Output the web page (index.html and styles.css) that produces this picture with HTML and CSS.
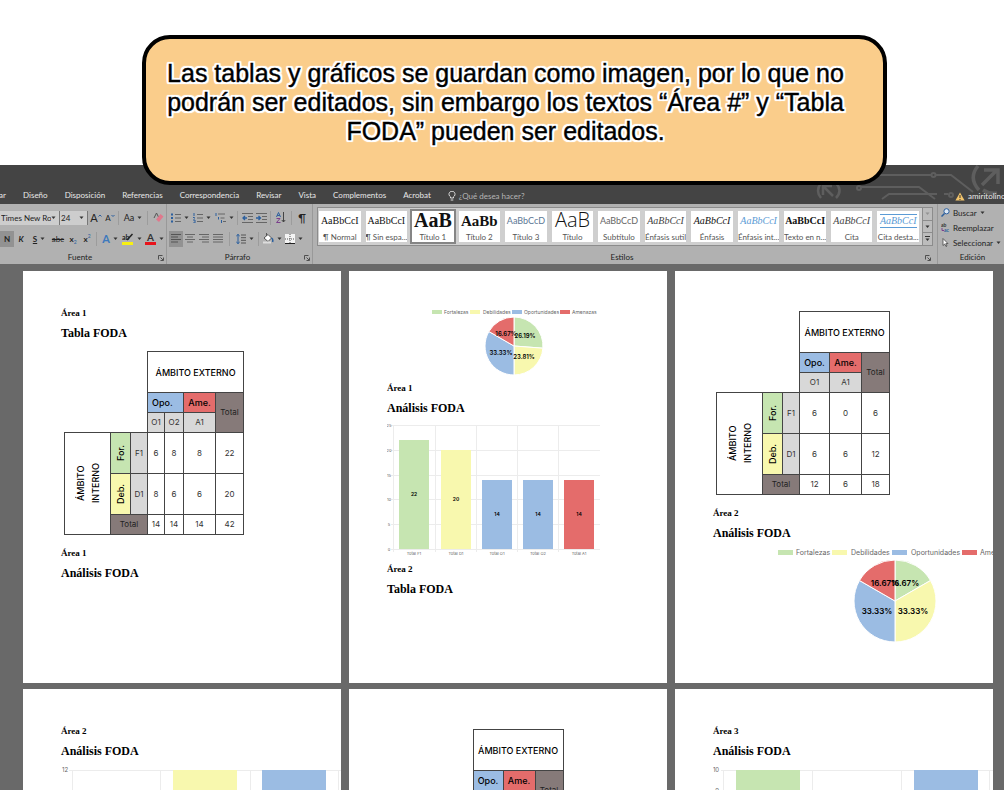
FILE: index.html
```html
<!DOCTYPE html>
<html lang="es">
<head>
<meta charset="utf-8">
<title>Tablas y gráficos FODA</title>
<link rel="stylesheet" href="styles.css">
</head>
<body>
<svg class="defs" aria-hidden="true">
  <symbol id="caret" viewBox="0 0 5 4"><path d="M0.5 0.5h4L2.5 3z" fill="#333"/></symbol>
  <symbol id="launch" viewBox="0 0 6 6"><path d="M0.5 4.5v-4h4M2.5 2.5l2.5 2.5M5.500 2.500v3h-3" fill="none" stroke="#444" stroke-width="0.9"/></symbol>
</svg>

<aside class="callout">
  <p>Las tablas y gráficos se guardan como imagen, por lo que no<br>podrán ser editados, sin embargo los textos “Área #” y “Tabla<br>FODA” pueden ser editados.</p>
</aside>

<main class="app">
  <header class="titlebar">
    <svg class="circuit" viewBox="0 0 190 38" aria-hidden="true">
      <g fill="none" stroke="#5e5e5e" stroke-width="2">
        <path d="M7 18q-6 8 0 15M22 18q7 8 0 15M19 31l-9-9M9 30v-9h9" stroke-width="2.500"/>
        <path d="M56 10h61M122 10h15l22 17M47 22h58l16 12M68 34l7-5h48M130 29h4"/>
        <circle cx="119.500" cy="10" r="2"/><circle cx="45" cy="23" r="2"/><circle cx="137" cy="30" r="2"/>
        <path d="M164 1q-10 12 1 24M169 25q6 4 14 3M168 20l15-15M170 5h14v14" stroke-width="3.500"/>
      </g>
    </svg>
    <nav class="tabs">
      <a href="#" class="cut">ar</a><a href="#">Diseño</a><a href="#">Disposición</a><a href="#">Referencias</a><a href="#">Correspondencia</a><a href="#">Revisar</a><a href="#">Vista</a><a href="#">Complementos</a><a href="#">Acrobat</a>
      <a href="#" class="ask"><svg width="8" height="10" viewBox="0 0 8 10"><path d="M2.500 7V5.800A3 3 0 1 1 5.500 5.800V7zM2.700 9h2.600" fill="none" stroke="#ddd"/></svg>¿Qué desea hacer?</a>
    </nav>
    <a href="#" class="account"><svg width="10" height="9" viewBox="0 0 10 9"><path d="M5 0.500L9.600 8.500H0.400z" fill="#f2c46b"/><path d="M5 3v3M5 7v1" stroke="#333"/></svg>amiritolino</a>
  </header>

  <section class="ribbon">
    <div class="group font-group">
      <div class="tools">
        <label class="box w60"><select aria-label="Fuente"><option>Times New Ro</option></select><svg class="caret"><use href="#caret"/></svg></label>
        <label class="box w28"><select aria-label="Tamaño"><option>24</option></select><svg class="caret"><use href="#caret"/></svg></label>
        <button class="w16 big" aria-label="Aumentar">A<svg width="4" height="8" viewBox="0 0 4 8"><path d="M0.500 2.500L2 1l1.500 1.500" fill="none" stroke="#2b5f9e"/></svg></button>
        <button class="w12" aria-label="Reducir">A<svg width="4" height="8" viewBox="0 0 4 8"><path d="M0.500 1L2 2.500 3.500 1" fill="none" stroke="#2b5f9e"/></svg></button>
        <i class="sep"></i>
        <button class="w24 case">Aa<svg class="caret"><use href="#caret"/></svg></button>
        <i class="sep"></i>
        <button class="w16" aria-label="Borrar formato"><svg width="11" height="11" viewBox="0 0 11 11"><path d="M1 6l2.500-5L5.500 5" fill="none" stroke="#555"/><path d="M3 7.500L7.500 2 10.500 4.500 6 10z" fill="#e0788c"/></svg></button>
      </div>
      <div class="tools">
        <button class="w14 pressed"><b>N</b></button>
        <button class="w14"><b><em>K</em></b></button>
        <button class="w22"><b><u>S</u></b><svg class="caret"><use href="#caret"/></svg></button>
        <button class="w16"><s>abc</s></button>
        <button class="w14"><b>x</b><small class="low">2</small></button>
        <button class="w14"><b>x</b><small class="high">2</small></button>
        <i class="sep"></i>
        <button class="w22 fx">A<svg class="caret"><use href="#caret"/></svg></button>
        <button class="w22" aria-label="Resaltado"><svg width="12" height="12" viewBox="0 0 12 12"><text x="0" y="7" font-size="7" font-weight="700" fill="#222">ab</text><path d="M5 7l5.500-6" stroke="#222" stroke-width="1.500"/><path d="M0 9h11v3H0z" fill="#f7f013"/></svg><svg class="caret"><use href="#caret"/></svg></button>
        <button class="w22" aria-label="Color de fuente"><svg width="11" height="12" viewBox="0 0 11 12"><text x="2" y="8" font-size="10" font-weight="700" fill="#333">A</text><path d="M0 9h11v3H0z" fill="#e8131b"/></svg><svg class="caret"><use href="#caret"/></svg></button>
      </div>
      <footer><span>Fuente</span><svg class="launch"><use href="#launch"/></svg></footer>
    </div>

    <div class="group para-group">
      <div class="tools">
        <button class="w22" aria-label="Viñetas"><svg width="10" height="10" viewBox="0 0 10 10"><path d="M0 1.500h2M0 5h2M0 8.500h2" stroke="#2b5f9e" stroke-width="2"/><path d="M4 1.500h6M4 5h6M4 8.500h6" stroke="#666"/></svg><svg class="caret"><use href="#caret"/></svg></button>
        <button class="w22" aria-label="Numeración"><svg width="10" height="10" viewBox="0 0 10 10"><path d="M1 0v3M0 4.500h1.500v1M0 7h2v3H0" stroke="#2b5f9e" fill="none"/><path d="M4 1.500h6M4 5h6M4 8.500h6" stroke="#666"/></svg><svg class="caret"><use href="#caret"/></svg></button>
        <button class="w22" aria-label="Lista multinivel"><svg width="11" height="10" viewBox="0 0 11 10"><path d="M1 0v3M3.500 4v2.500M6.500 7v3" stroke="#2b5f9e"/><path d="M3 1h7M5.500 5h4M8 8.500h3" stroke="#666"/></svg><svg class="caret"><use href="#caret"/></svg></button>
        <i class="sep"></i>
        <button class="w14" aria-label="Reducir sangría"><svg width="11" height="10" viewBox="0 0 11 10"><path d="M0 .5h11M6 3.500h5M6 6.500h5M0 9.500h11" stroke="#666"/><path d="M5 5H1M3 3L1 5l2 2" stroke="#2b5f9e" stroke-width="1.300" fill="none"/></svg></button>
        <button class="w14" aria-label="Aumentar sangría"><svg width="11" height="10" viewBox="0 0 11 10"><path d="M0 .5h11M6 3.500h5M6 6.500h5M0 9.500h11" stroke="#666"/><path d="M0 5h4M2.500 3l2 2-2 2" stroke="#2b5f9e" stroke-width="1.300" fill="none"/></svg></button>
        <i class="sep"></i>
        <button class="w16" aria-label="Ordenar"><svg width="10" height="11" viewBox="0 0 10 11"><path d="M0.500 5L2.500 0.500 4.500 5M1.200 3.500h2.600" stroke="#2b5f9e" fill="none"/><path d="M.5 6.500h3.500l-3.500 4H4.500" stroke="#7b3f8c" fill="none"/><path d="M7.500 0v10M5.800 8l1.700 2L9.200 8" stroke="#444" fill="none"/></svg></button>
        <i class="sep"></i>
        <button class="w16 big" aria-label="Marcas">¶</button>
      </div>
      <div class="tools">
        <button class="w14 pressed" aria-label="Izquierda"><svg width="10" height="9" viewBox="0 0 10 9"><path d="M0 .5h10M0 3h7M0 5.500h10M0 8h7" stroke="#555"/></svg></button>
        <button class="w14" aria-label="Centrar"><svg width="10" height="9" viewBox="0 0 10 9"><path d="M0 .5h10M2 3h6M0 5.500h10M2 8h6" stroke="#666"/></svg></button>
        <button class="w14" aria-label="Derecha"><svg width="10" height="9" viewBox="0 0 10 9"><path d="M0 .5h10M3 3h7M0 5.500h10M3 8h7" stroke="#666"/></svg></button>
        <button class="w14" aria-label="Justificar"><svg width="10" height="9" viewBox="0 0 10 9"><path d="M0 .5h10M0 3h10M0 5.500h10M0 8h10" stroke="#666"/></svg></button>
        <i class="sep wide"></i>
        <button class="w22" aria-label="Interlineado"><svg width="10" height="10" viewBox="0 0 10 10"><path d="M2 0v10M.3 2L2 .5 3.700 2M.3 8L2 9.500 3.700 8" stroke="#2b5f9e" fill="none"/><path d="M5 1h5M5 3.700h5M5 6.300h5M5 9h5" stroke="#555"/></svg><svg class="caret"><use href="#caret"/></svg></button>
        <i class="sep"></i>
        <button class="w22" aria-label="Sombreado"><svg width="11" height="11" viewBox="0 0 11 11"><path d="M1 5L5 1.500 8.500 5 5 8.500z" fill="#fff" stroke="#555"/><path d="M3.500 3V0" stroke="#555"/><path d="M8.500 5q2 1.500 1 4" stroke="#2b5f9e" fill="none" stroke-width="1.500"/><path d="M0 9.500h8" stroke="#ddd" stroke-width="2"/></svg><svg class="caret"><use href="#caret"/></svg></button>
        <button class="w22" aria-label="Bordes"><svg width="10" height="10" viewBox="0 0 10 10"><path d="M0 0h10v10H0z" fill="#f4f4f4"/><path d="M0 5h10M5 0v10" stroke="#555" stroke-dasharray="1 1"/><path d="M0 9.500h10" stroke="#222"/></svg><svg class="caret"><use href="#caret"/></svg></button>
      </div>
      <footer><span>Párrafo</span><svg class="launch"><use href="#launch"/></svg></footer>
    </div>

    <div class="group style-group">
      <div class="gallery">
        <div class="tiles">
          <button class="tile"><span class="pv">AaBbCcI</span><span>¶ Normal</span></button>
          <button class="tile"><span class="pv">AaBbCcI</span><span>¶ Sin espa...</span></button>
          <button class="tile selected"><span class="pv t1">AaB</span><span>Título 1</span></button>
          <button class="tile"><span class="pv t2">AaBb</span><span>Título 2</span></button>
          <button class="tile"><span class="pv sans blue">AaBbCcD</span><span>Título 3</span></button>
          <button class="tile"><span class="pv title">AaB</span><span>Título</span></button>
          <button class="tile"><span class="pv sans">AaBbCcD</span><span>Subtítulo</span></button>
          <button class="tile"><span class="pv it">AaBbCcI</span><span>Énfasis sutil</span></button>
          <button class="tile"><span class="pv it dark">AaBbCcI</span><span>Énfasis</span></button>
          <button class="tile"><span class="pv it sky">AaBbCcI</span><span>Énfasis int...</span></button>
          <button class="tile"><span class="pv strong">AaBbCcI</span><span>Texto en n...</span></button>
          <button class="tile"><span class="pv it">AaBbCcI</span><span>Cita</span></button>
          <button class="tile"><span class="pv it sky ruled">AaBbCcI</span><span>Cita desta...</span></button>
        </div>
        <div class="scroller">
          <button aria-label="Subir"><svg class="caret faint"><use href="#caret"/></svg></button>
          <button aria-label="Bajar"><svg class="caret"><use href="#caret"/></svg></button>
          <button aria-label="Más"><svg width="5" height="6" viewBox="0 0 5 6"><path d="M0 .5h5" stroke="#333"/><path d="M.5 2.500h4L2.500 5z" fill="#333"/></svg></button>
        </div>
      </div>
      <footer><span>Estilos</span><svg class="launch"><use href="#launch"/></svg></footer>
    </div>

    <div class="group edit-group">
      <button><svg width="9" height="9" viewBox="0 0 9 9"><circle cx="5.500" cy="3.300" r="2.600" fill="#dce8f5" stroke="#2b5f9e"/><path d="M3.500 5.500L.5 8.500" stroke="#2b5f9e" stroke-width="1.500"/></svg>Buscar<svg class="caret"><use href="#caret"/></svg></button>
      <button><svg width="9" height="9" viewBox="0 0 9 9"><text x="0" y="4" font-size="5" font-weight="700" fill="#333">ab</text><text x="3" y="9" font-size="5" font-weight="700" fill="#2b5f9e">ac</text><path d="M1 5v2.500h2" stroke="#7b3f8c" fill="none"/></svg>Reemplazar</button>
      <button><svg width="9" height="9" viewBox="0 0 9 9"><path d="M2 0.500v7l1.700-1.500L5 8.500l1-.5-1.200-2.400H7z" fill="#fff" stroke="#444" stroke-width=".8"/></svg>Seleccionar<svg class="caret"><use href="#caret"/></svg></button>
      <footer><span>Edición</span></footer>
    </div>
  </section>

  <section class="workspace">
    <article class="page">
      <h2>Área 1</h2>
      <h1>Tabla FODA</h1>
      <table class="foda">
        <colgroup><col class="c46"><col class="c20"><col class="c17"><col class="c17"><col class="c19"><col class="c32"><col class="c28"></colgroup>
        <tr class="tall"><td class="blank" colspan="3" rowspan="3"></td><th colspan="4">ÁMBITO EXTERNO</th></tr>
        <tr><th class="opo start" colspan="2">Opo.</th><th class="ame">Ame.</th><td class="total" rowspan="2">Total</td></tr>
        <tr><td class="key">O1</td><td class="key">O2</td><td class="key">A1</td></tr>
        <tr class="tall"><th class="side" rowspan="3"><span>ÁMBITO<br>INTERNO</span></th><th class="for"><span>For.</span></th><td class="key">F1</td><td>6</td><td>8</td><td>8</td><td>22</td></tr>
        <tr class="tall"><th class="deb"><span>Deb.</span></th><td class="key">D1</td><td>8</td><td>6</td><td>6</td><td>20</td></tr>
        <tr><td class="total" colspan="2">Total</td><td>14</td><td>14</td><td>14</td><td>42</td></tr>
      </table>
      <h2>Área 1</h2>
      <h1>Análisis FODA</h1>
    </article>

    <article class="page">
      <svg class="chart" width="220" height="75" viewBox="0 0 220 75" role="img" aria-label="Distribución FODA del área 1">
        <g class="legend s5">
          <path d="M45 7h10v4H45z" class="g"/><text x="57" y="11">Fortalezas</text>
          <path d="M83 7h10v4H83z" class="y"/><text x="96" y="11">Debilidades</text>
          <path d="M125 7h10v4h-10z" class="b"/><text x="137" y="11">Oportunidades</text>
          <path d="M173 7h10v4h-10z" class="r"/><text x="185" y="11">Amenazas</text>
        </g>
        <g class="slices">
          <path class="g" d="M127 43V14A29 29 0 0 1 155.900 45.200z"/>
          <path class="y" d="M127 43L155.900 45.200A29 29 0 0 1 127 72z"/>
          <path class="b" d="M127 43V72A29 29 0 0 1 101.900 28.500z"/>
          <path class="r" d="M127 43L101.900 28.500A29 29 0 0 1 127 14z"/>
        </g>
        <g class="value s6"><text x="119" y="33">16.67%</text><text x="138" y="35">26.19%</text><text x="114" y="52">33.33%</text><text x="137" y="56">23.81%</text></g>
      </svg>
      <h2>Área 1</h2>
      <h1>Análisis FODA</h1>
      <svg class="chart" width="220" height="141" viewBox="0 0 220 141" role="img" aria-label="Totales del área 1">
        <path class="grid" d="M4 7.500h209M4 32.500h209M4 57.500h209M4 81.500h209M4 106.500h209M4 131.500h209M6.500 7v127M48.500 7v127M89.500 7v127M130.500 7v127M171.500 7v127"/>
        <path class="g" d="M12 22h30v109H12z"/><path class="y" d="M54 32h30v99H54z"/><path class="b" d="M95 62h30v69H95zM136 62h30v69h-30z"/><path class="r" d="M177 62h30v69h-30z"/>
        <g class="value s5"><text x="27" y="78">22</text><text x="69" y="83">20</text><text x="110" y="98">14</text><text x="151" y="98">14</text><text x="192" y="98">14</text></g>
        <g class="axis s4"><text x="2" y="9">25</text><text x="2" y="34">20</text><text x="2" y="59">15</text><text x="2" y="83">10</text><text x="2" y="108">5</text><text x="2" y="133">0</text>
        <text x="27" y="137">Total F1</text><text x="69" y="137">Total D1</text><text x="110" y="137">Total O1</text><text x="151" y="137">Total O2</text><text x="192" y="137">Total A1</text></g>
      </svg>
      <h2>Área 2</h2>
      <h1>Tabla FODA</h1>
    </article>

    <article class="page">
      <table class="foda">
        <colgroup><col class="c46"><col class="c20"><col class="c17"><col class="c30"><col class="c32"><col class="c28"></colgroup>
        <tr class="tall"><td class="blank" colspan="3" rowspan="3"></td><th colspan="3">ÁMBITO EXTERNO</th></tr>
        <tr><th class="opo">Opo.</th><th class="ame">Ame.</th><td class="total" rowspan="2">Total</td></tr>
        <tr><td class="key">O1</td><td class="key">A1</td></tr>
        <tr class="tall"><th class="side" rowspan="3"><span>ÁMBITO<br>INTERNO</span></th><th class="for"><span>For.</span></th><td class="key">F1</td><td>6</td><td>0</td><td>6</td></tr>
        <tr class="tall"><th class="deb"><span>Deb.</span></th><td class="key">D1</td><td>6</td><td>6</td><td>12</td></tr>
        <tr><td class="total" colspan="2">Total</td><td>12</td><td>6</td><td>18</td></tr>
      </table>
      <h2>Área 2</h2>
      <h1>Análisis FODA</h1>
      <svg class="chart" width="310" height="104" viewBox="0 0 310 104" role="img" aria-label="Distribución FODA del área 2">
        <g class="legend s7">
          <path d="M65 7h15v5H65z" class="g"/><text x="83" y="12">Fortalezas</text>
          <path d="M119 7h15v5h-15z" class="y"/><text x="138" y="12">Debilidades</text>
          <path d="M179 7h15v5h-15z" class="b"/><text x="198" y="12">Oportunidades</text>
          <path d="M249 7h15v5h-15z" class="r"/><text x="267" y="12">Amenazas</text>
        </g>
        <g class="slices">
          <path class="g" d="M182 58V17A41 41 0 0 1 217.500 37.500z"/>
          <path class="y" d="M182 58L217.500 37.500A41 41 0 0 1 182 99z"/>
          <path class="b" d="M182 58V99A41 41 0 0 1 146.500 37.500z"/>
          <path class="r" d="M182 58L146.500 37.500A41 41 0 0 1 182 17z"/>
        </g>
        <g class="value s8"><text x="172" y="43">16.67%</text><text x="192" y="43">16.67%</text><text x="164" y="71">33.33%</text><text x="200" y="71">33.33%</text></g>
      </svg>
    </article>

    <article class="page">
      <h2>Área 2</h2>
      <h1>Análisis FODA</h1>
      <svg class="chart" width="280" height="200" viewBox="0 0 280 200" role="img" aria-label="Totales del área 2">
        <path class="grid" d="M8 9.500h272M11.500 9v180M99.500 9v180M189.500 9v180M277.500 9v180"/>
        <path class="y" d="M112 9h64v180h-64z"/><path class="b" d="M201 9h64v180h-64z"/>
        <g class="axis s6"><text x="4" y="11">12</text></g>
      </svg>
    </article>

    <article class="page">
      <table class="foda">
        <colgroup><col class="c46"><col class="c20"><col class="c17"><col class="c30"><col class="c32"><col class="c28"></colgroup>
        <tr class="tall"><td class="blank" colspan="3" rowspan="3"></td><th colspan="3">ÁMBITO EXTERNO</th></tr>
        <tr><th class="opo">Opo.</th><th class="ame">Ame.</th><td class="total" rowspan="2">Total</td></tr>
        <tr><td class="key">O1</td><td class="key">A1</td></tr>
      </table>
    </article>

    <article class="page">
      <h2>Área 3</h2>
      <h1>Análisis FODA</h1>
      <svg class="chart" width="280" height="200" viewBox="0 0 280 200" role="img" aria-label="Totales del área 3">
        <path class="grid" d="M8 9.500h272M8 29.500h272M10.500 9v180M99.500 9v180M188.500 9v180M276.500 9v180"/>
        <path class="g" d="M23 9h64v180H23z"/><path class="b" d="M201 9h64v180h-64z"/>
        <g class="axis s6"><text x="3" y="11">10</text><text x="4" y="32">9</text></g>
      </svg>
    </article>
  </section>
</main>
</body>
</html>
```
FILE: styles.css
```css
* { box-sizing: border-box; }
body {
  margin: 0;
  height: 100vh;
  display: flex;
  flex-direction: column;
  overflow: hidden;
  background: #fff;
  font-family: Lato, "Open Sans", sans-serif;
  font-size: 8px;
  color: #222;
}
.defs { position: absolute; width: 0; height: 0; }
button, select {
  font: inherit;
  color: inherit;
  background: none;
  border: 0;
  padding: 0;
  margin: 0;
}
a { color: inherit; text-decoration: none; }
svg { flex: none; }

/* Callout */
.callout {
  position: absolute;
  z-index: 2;
  top: 35px;
  left: 142px;
  right: 117px;
  height: 150px;
  padding: 20px 30px 0 12px;
  background: #facd8b;
  border: 4px solid #000;
  border-radius: 28px;
}
.callout p {
  margin: 0;
  font: 25px/29px "Liberation Sans", Arial, sans-serif;
  text-align: center;
  white-space: nowrap;
  color: #000;
  -webkit-text-stroke: 0.4px #000;
  text-shadow: 2px 0 #fff, -2px 0 #fff, 0 2px #fff, 0 -2px #fff, 2px 1px #fff, -2px 1px #fff, 2px -1px #fff, -2px -1px #fff, 1px 2px #fff, -1px 2px #fff, 1px -2px #fff, -1px -2px #fff, 2px 2px 1px #fff, -2px -2px 1px #fff, 2px -2px 1px #fff, -2px 2px 1px #fff;
}

/* Window */
.app {
  margin-top: 165px;
  flex: 1;
  min-height: 0;
  display: flex;
  flex-direction: column;
  background: #696969;
}
.titlebar {
  position: relative;
  flex: none;
  height: 39px;
  padding-top: 23px;
  display: flex;
  justify-content: space-between;
  background: #444;
  color: #e8e8e8;
  line-height: 15px;
  overflow: hidden;
}
.circuit { position: absolute; right: 0; top: 0; width: 190px; height: 38px; }
.tabs { display: flex; gap: 17px; padding-left: 1px; white-space: nowrap; }
.tabs .cut { width: 5px; display: flex; justify-content: flex-end; }
.ask { display: flex; align-items: center; gap: 3px; color: #b5b5b5; }
.account {
  position: relative;
  width: 49px;
  display: flex;
  align-items: center;
  gap: 3px;
  white-space: nowrap;
  overflow: hidden;
}

/* Ribbon */
.ribbon { flex: none; height: 60px; display: flex; background: #b1b1b1; }
.group {
  display: flex;
  flex-direction: column;
  border-right: 1px solid #999;
  padding-top: 3px;
}
.font-group { width: 167px; }
.para-group { width: 146px; padding-left: 2px; }
.style-group { flex: 1; min-width: 0; padding: 3px 4px 0; }
.edit-group { width: 66px; border: 0; padding: 1px 0 0 3px; }
.tools { display: flex; align-items: center; height: 21px; }
.tools button {
  height: 16px;
  display: flex;
  align-items: center;
  justify-content: center;
  gap: 3px;
  line-height: 16px;
}
.tools .pressed { background: #929292; }
.tools .big { font-size: 11px; }
.tools .case { font-size: 9px; }
.tools .big, .tools .w12, .tools .w14 { gap: 0; }
.tools .fx { font-size: 11px; font-weight: 700; color: #3d79bd; }
.low { font-size: 5px; align-self: flex-end; line-height: 10px; color: #2b5f9e; }
.high { font-size: 5px; align-self: flex-start; line-height: 10px; color: #2b5f9e; }
.w12 { width: 12px; }
.w14 { width: 14px; }
.w16 { width: 16px; }
.w22 { width: 22px; }
.w24 { width: 24px; }
.w28 { width: 28px; }
.w60 { width: 60px; }
.sep { width: 1px; height: 14px; margin: 0 2px; background: #9c9c9c; }
.sep.wide { margin: 0 4px; }
.caret { width: 5px; height: 4px; }
.faint { opacity: .3; }
.launch { width: 6px; height: 6px; }
.box {
  height: 14px;
  display: flex;
  align-items: center;
  padding: 0 3px 0 1px;
  background: #cdcdcd;
  border-right: 1px solid #777;
}
.box select { appearance: none; flex: 1; min-width: 0; height: 14px; }
.group footer {
  margin-top: auto;
  height: 13px;
  padding: 0 2px;
  display: flex;
  align-items: center;
  justify-content: flex-end;
  line-height: 13px;
}
.group footer span { flex: 1; text-align: center; }

.gallery {
  height: 39px;
  display: flex;
  gap: 3px;
  background: #cfcfcf;
  border: 1px solid #8c8c8c;
}
.tiles {
  flex: 1;
  min-width: 0;
  display: grid;
  grid-template-columns: repeat(13, minmax(0, 1fr));
  gap: 5px;
  padding: 3px 0 3px 1px;
}
.tile {
  display: flex;
  flex-direction: column;
  align-items: center;
  justify-content: space-between;
  background: #fff;
  overflow: hidden;
  white-space: nowrap;
  line-height: 10px;
  color: #555;
}
.tile.selected { outline: 2px solid #858585; }
.pv {
  height: 20px;
  font: 10px/20px "Liberation Serif", serif;
  color: #111;
}
.t1 { font-size: 20px; line-height: 18px; font-weight: 700; }
.t2 { font-size: 15px; font-weight: 700; }
.title { font: 300 20px/18px "Open Sans", sans-serif; }
.sans { font: 9px/20px Lato, sans-serif; color: #666; }
.blue { color: #5b7795; }
.it { font-style: italic; color: #444; }
.dark { color: #111; }
.sky { color: #5b9bd5; }
.strong { font-weight: 700; }
.ruled { height: 14px; line-height: 12px; margin-top: 3px; border: 1px solid #5b9bd5; border-width: 1px 0; }
.scroller { width: 10px; display: flex; flex-direction: column; border-left: 1px solid #8c8c8c; }
.scroller button { flex: 1; display: flex; align-items: center; justify-content: center; background: #bcbcbc; }
.scroller button + button { border-top: 1px solid #8c8c8c; }

.edit-group button {
  height: 15px;
  display: flex;
  align-items: center;
  gap: 3px;
  white-space: nowrap;
}

/* Document pages */
.workspace {
  flex: 1;
  min-height: 0;
  overflow: hidden;
  display: grid;
  grid-template-columns: repeat(3, minmax(0, 1fr));
  grid-auto-rows: min-content;
  gap: 6px 8px;
  padding: 7px 11px 0 23px;
}
.page {
  min-height: 412px;
  padding: 32px 0 0 38px;
  background: #fff;
  overflow: hidden;
  color: #000;
}
.page h1, .page h2 {
  margin: 0;
  font-family: "Liberation Serif", serif;
  font-weight: 700;
  line-height: 20px;
}
.page h1 { font-size: 12px; }
.page h2 { font-size: 9px; }

.foda {
  margin: 8px 0 8px 3px;
  width: min-content;
  table-layout: fixed;
  border-collapse: collapse;
  font-family: Inter, sans-serif;
  font-size: 8px;
  line-height: 15px;
  text-align: center;
  color: #333;
}
.foda tr { height: 20px; }
.foda .tall { height: 41px; }
.foda td, .foda th { padding: 0; border: 1px solid #444; white-space: nowrap; }
.foda th { font-size: 9px; font-weight: 500; color: #000; }
.foda .blank { border: 0; }
.foda .key { background: #d8d8d8; }
.foda .total { background: #867a79; color: #222; }
.foda .opo { background: #9bbce3; }
.foda .start { text-align: left; padding-left: 4px; }
.foda .ame { background: #e46c6b; }
.foda .for { background: #c6e5b1; }
.foda .deb { background: #f8f8ae; }
.foda th span { display: inline-block; writing-mode: vertical-rl; transform: rotate(180deg); vertical-align: middle; }
.c17 { width: 17px; }
.c19 { width: 19px; }
.c20 { width: 20px; }
.c28 { width: 28px; }
.c30 { width: 30px; }
.c32 { width: 32px; }
.c46 { width: 46px; }

.chart { display: block; max-width: none; font-family: Inter, sans-serif; }
.g { fill: #c6e5b1; }
.y { fill: #f8f8ae; }
.b { fill: #9bbce3; }
.r { fill: #e46c6b; }
.slices path { stroke: #fff; stroke-width: 1; }
.legend text, .axis text { fill: #666; }
.value text { fill: #000; text-anchor: middle; font-weight: 600; }
.axis text { text-anchor: middle; }
.grid { fill: none; stroke: #ececec; }
.s4 { font-size: 4px; }
.s5 { font-size: 5px; }
.s6 { font-size: 6px; }
.s7 { font-size: 7px; }
.s8 { font-size: 8px; }
```
